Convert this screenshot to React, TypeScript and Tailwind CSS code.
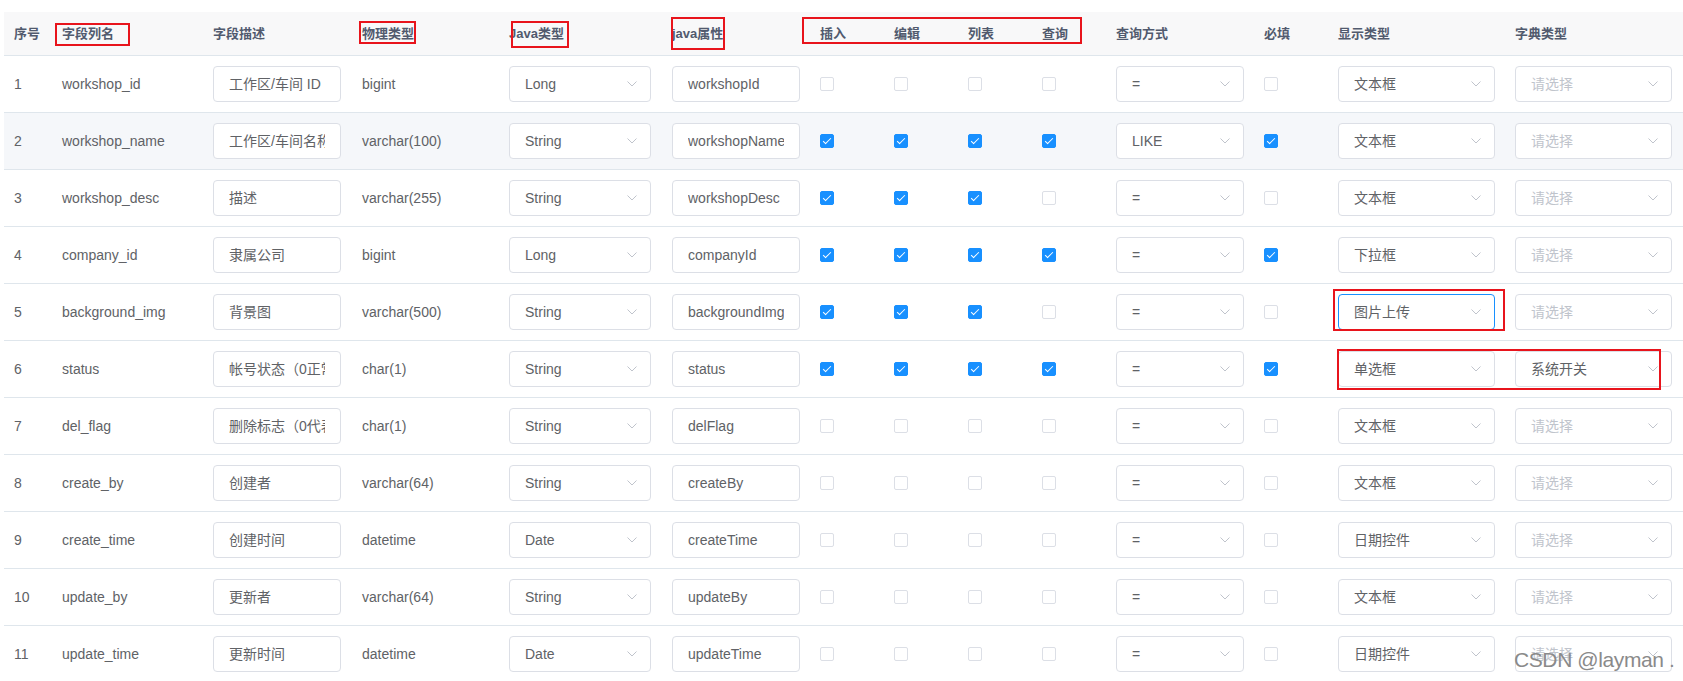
import React from "react";

type Row = {
  name: string;
  desc: string;
  phys: string;
  java: string;
  prop: string;
  checks: boolean[];
  query: string;
  required: boolean;
  html: string;
  dict: string;
};

const rows: Row[] = [
  { name: "workshop_id", desc: "工作区/车间 ID", phys: "bigint", java: "Long", prop: "workshopId", checks: [false, false, false, false], query: "=", required: false, html: "文本框", dict: "" },
  { name: "workshop_name", desc: "工作区/车间名称", phys: "varchar(100)", java: "String", prop: "workshopName", checks: [true, true, true, true], query: "LIKE", required: true, html: "文本框", dict: "" },
  { name: "workshop_desc", desc: "描述", phys: "varchar(255)", java: "String", prop: "workshopDesc", checks: [true, true, true, false], query: "=", required: false, html: "文本框", dict: "" },
  { name: "company_id", desc: "隶属公司", phys: "bigint", java: "Long", prop: "companyId", checks: [true, true, true, true], query: "=", required: true, html: "下拉框", dict: "" },
  { name: "background_img", desc: "背景图", phys: "varchar(500)", java: "String", prop: "backgroundImg", checks: [true, true, true, false], query: "=", required: false, html: "图片上传", dict: "" },
  { name: "status", desc: "帐号状态（0正常 1停用）", phys: "char(1)", java: "String", prop: "status", checks: [true, true, true, true], query: "=", required: true, html: "单选框", dict: "系统开关" },
  { name: "del_flag", desc: "删除标志（0代表存在 2代表删除）", phys: "char(1)", java: "String", prop: "delFlag", checks: [false, false, false, false], query: "=", required: false, html: "文本框", dict: "" },
  { name: "create_by", desc: "创建者", phys: "varchar(64)", java: "String", prop: "createBy", checks: [false, false, false, false], query: "=", required: false, html: "文本框", dict: "" },
  { name: "create_time", desc: "创建时间", phys: "datetime", java: "Date", prop: "createTime", checks: [false, false, false, false], query: "=", required: false, html: "日期控件", dict: "" },
  { name: "update_by", desc: "更新者", phys: "varchar(64)", java: "String", prop: "updateBy", checks: [false, false, false, false], query: "=", required: false, html: "文本框", dict: "" },
  { name: "update_time", desc: "更新时间", phys: "datetime", java: "Date", prop: "updateTime", checks: [false, false, false, false], query: "=", required: false, html: "日期控件", dict: "" },
];

const gridCols =
  "grid grid-cols-[48px_151px_149px_147px_163px_148px_74px_74px_74px_74px_148px_74px_177px_178px]";

function Chevron() {
  return (
    <svg width="10" height="6" viewBox="0 0 10 6" className="shrink-0">
      <path d="M0.5 0.5 L5 5 L9.5 0.5" fill="none" stroke="#c0c4cc" strokeWidth="1" />
    </svg>
  );
}

function TextInput({ value, width }: { value: string; width: string }) {
  return (
    <div className={`${width} h-[36px] border border-[#dcdfe6] rounded-[4px] bg-white px-[15px] flex items-center`}>
      <div className="overflow-hidden whitespace-nowrap w-full">{value}</div>
    </div>
  );
}

function Select({ value, width, focused }: { value: string; width: string; focused?: boolean }) {
  return (
    <div
      className={`${width} h-[36px] border rounded-[4px] bg-white pl-[15px] pr-[13px] flex items-center justify-between ${
        focused ? "border-[#1890ff]" : "border-[#dcdfe6]"
      }`}
    >
      {value ? (
        <span className="whitespace-nowrap">{value}</span>
      ) : (
        <span className="whitespace-nowrap text-[#c0c4cc]">请选择</span>
      )}
      <Chevron />
    </div>
  );
}

function Check({ on }: { on: boolean }) {
  return (
    <span
      className={`relative inline-block w-[14px] h-[14px] rounded-[2px] border ${
        on ? "bg-[#1890ff] border-[#1890ff]" : "bg-white border-[#dcdfe6]"
      }`}
    >
      {on && (
        <span className="absolute left-[4px] top-[1px] w-[4px] h-[8px] border-r border-b border-white rotate-45" />
      )}
    </span>
  );
}

const headers = ["序号", "字段列名", "字段描述", "物理类型", "Java类型", "java属性", "插入", "编辑", "列表", "查询", "查询方式", "必填", "显示类型", "字典类型"];

export default function App() {
  return (
    <div className="relative w-[1683px] h-[681px] overflow-hidden bg-white pt-[12px] font-['Liberation_Sans','Noto_Sans_CJK_SC',sans-serif] text-[14px] text-[#606266]">
      <div className="ml-[4px]">
        {/* header */}
        <div className={`${gridCols} h-[44px] bg-[#f8f8f9] border-b border-[#dfe6ec]`}>
          {headers.map((h) => (
            <div key={h} className="px-[10px] flex items-center text-[13px] font-bold text-[#515a6e] whitespace-nowrap">
              {h}
            </div>
          ))}
        </div>

        {rows.map((r, i) => (
          <div
            key={r.name}
            className={`${gridCols} h-[57px] border-b border-[#dfe6ec] ${i === 1 ? "bg-[#f5f7fa]" : "bg-white"}`}
          >
            <div className="px-[10px] flex items-center">{i + 1}</div>
            <div className="px-[10px] flex items-center whitespace-nowrap">{r.name}</div>
            <div className="px-[10px] flex items-center">
              <TextInput value={r.desc} width="w-[128px]" />
            </div>
            <div className="px-[10px] flex items-center whitespace-nowrap">{r.phys}</div>
            <div className="px-[10px] flex items-center">
              <Select value={r.java} width="w-[142px]" />
            </div>
            <div className="px-[10px] flex items-center">
              <TextInput value={r.prop} width="w-[128px]" />
            </div>
            {r.checks.map((c, k) => (
              <div key={k} className="px-[10px] flex items-center">
                <Check on={c} />
              </div>
            ))}
            <div className="px-[10px] flex items-center">
              <Select value={r.query} width="w-[128px]" />
            </div>
            <div className="px-[10px] flex items-center">
              <Check on={r.required} />
            </div>
            <div className="px-[10px] flex items-center">
              <Select value={r.html} width="w-[158px]" focused={i === 4} />
            </div>
            <div className="px-[10px] flex items-center">
              <Select value={r.dict} width="w-[157px]" />
            </div>
          </div>
        ))}
      </div>

      {/* red annotation boxes */}
      <div className="absolute left-[55px] top-[23px] w-[75px] h-[23px] border-2 border-[#e8141c]" />
      <div className="absolute left-[359px] top-[21px] w-[57px] h-[23px] border-2 border-[#e8141c]" />
      <div className="absolute left-[511px] top-[21px] w-[58px] h-[27px] border-2 border-[#e8141c]" />
      <div className="absolute left-[671px] top-[17px] w-[54px] h-[33px] border-2 border-[#e8141c]" />
      <div className="absolute left-[802px] top-[17px] w-[280px] h-[27px] border-2 border-[#e8141c]" />
      <div className="absolute left-[1333px] top-[289px] w-[172px] h-[42px] border-2 border-[#e8141c]" />
      <div className="absolute left-[1337px] top-[349px] w-[324px] h-[41px] border-2 border-[#e8141c]" />

      {/* watermark */}
      <div className="absolute left-[1514px] top-[647px] text-[21px] leading-[26px] tracking-[-0.4px] text-[#8a8a8a] whitespace-nowrap">
        CSDN @layman .
      </div>
    </div>
  );
}
